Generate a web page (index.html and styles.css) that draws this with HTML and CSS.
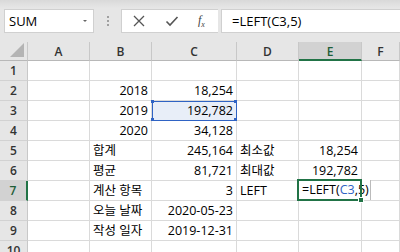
FILE: index.html
```html
<!DOCTYPE html>
<html lang="ko">
<head>
    <meta charset="UTF-8">
    <title>LEFT 함수</title>
    <link rel="stylesheet" href="styles.css">
</head>
<body>
    <div id="toolbar">
        <div class="nameBox">
            <span>SUM</span>
            <span class="caret"></span>
        </div>
        <div class="grip"><span class="gripDots"></span></div>
        <div class="fxButtons">
            <svg width="14" height="14" viewBox="0 0 14 14"><path d="M2 2 L12 12 M12 2 L2 12" stroke="#555" stroke-width="1.3" fill="none"/></svg>
            <svg width="14" height="14" viewBox="0 0 14 14"><path d="M1.5 7.5 L5 11 L12.5 3" stroke="#555" stroke-width="1.6" fill="none"/></svg>
            <span class="fx">f<sub>x</sub></span>
        </div>
        <div class="formula">=LEFT(C3,5)</div>
    </div>

    <div id="sheet">
        <div class="corner"><span class="tri"></span></div>
        <div class="colHead">A</div>
        <div class="colHead">B</div>
        <div class="colHead">C</div>
        <div class="colHead">D</div>
        <div class="colHead active">E</div>
        <div class="colHead">F</div>

        <div class="rowHead">1</div>
        <div class="cell"></div><div class="cell"></div><div class="cell"></div><div class="cell"></div><div class="cell"></div><div class="cell"></div>

        <div class="rowHead">2</div>
        <div class="cell"></div><div class="cell num">2018</div><div class="cell num">18,254</div><div class="cell"></div><div class="cell"></div><div class="cell"></div>

        <div class="rowHead">3</div>
        <div class="cell"></div><div class="cell num">2019</div>
        <div class="cell num refCell">192,782<i class="dot tl"></i><i class="dot tr"></i><i class="dot bl"></i><i class="dot br"></i></div>
        <div class="cell"></div><div class="cell"></div><div class="cell"></div>

        <div class="rowHead">4</div>
        <div class="cell"></div><div class="cell num">2020</div><div class="cell num">34,128</div><div class="cell"></div><div class="cell"></div><div class="cell"></div>

        <div class="rowHead">5</div>
        <div class="cell"></div><div class="cell">합계</div><div class="cell num">245,164</div><div class="cell">최소값</div><div class="cell num">18,254</div><div class="cell"></div>

        <div class="rowHead">6</div>
        <div class="cell"></div><div class="cell">평균</div><div class="cell num">81,721</div><div class="cell">최대값</div><div class="cell num">192,782</div><div class="cell"></div>

        <div class="rowHead active">7</div>
        <div class="cell"></div><div class="cell">계산 항목</div><div class="cell num">3</div><div class="cell">LEFT</div>
        <div class="cell editing"><span class="editText">=LEFT(<b>C3</b>,5)</span><span class="selBox"></span><span class="handle"></span></div>
        <div class="cell"></div>

        <div class="rowHead">8</div>
        <div class="cell"></div><div class="cell">오늘 날짜</div><div class="cell num">2020-05-23</div><div class="cell"></div><div class="cell"></div><div class="cell"></div>

        <div class="rowHead">9</div>
        <div class="cell"></div><div class="cell">작성 일자</div><div class="cell num">2019-12-31</div><div class="cell"></div><div class="cell"></div><div class="cell"></div>

        <div class="rowHead">10</div>
        <div class="cell"></div><div class="cell"></div><div class="cell"></div><div class="cell"></div><div class="cell"></div><div class="cell"></div>
    </div>
</body>
</html>
```

FILE: styles.css
```css
body {
    margin: 0;
    padding: 0;
    width: 400px;
    height: 252px;
    overflow: hidden;
    background-color: #fff;
    font-family: 'Open Sans', 'Noto Sans CJK KR', sans-serif;
    color: #000;
}

#toolbar {
    height: 42px;
    box-sizing: border-box;
    padding-top: 9px;
    display: flex;
    align-items: flex-start;
    background: linear-gradient(#d9d9d9, #e6e6e6 8px);
}

.nameBox {
    width: 90px;
    height: 24px;
    margin-left: 4px;
    box-sizing: border-box;
    background-color: #fff;
    border: 1px solid #d0d0d0;
    display: flex;
    align-items: center;
    justify-content: space-between;
    padding: 0 6px 0 4px;
    font-size: 13px;
}

.caret {
    width: 0;
    height: 0;
    border-left: 2px solid transparent;
    border-right: 2px solid transparent;
    border-top: 2px solid #666;
}

.grip {
    width: 27px;
    height: 24px;
    display: flex;
    justify-content: center;
    align-items: center;
}

.gripDots {
    width: 2px;
    height: 2px;
    background-color: #a0a0a0;
    box-shadow: 0 -4px 0 #a0a0a0, 0 4px 0 #a0a0a0;
}

.fxButtons {
    width: 97px;
    height: 24px;
    box-sizing: border-box;
    background-color: #fff;
    border: 1px solid #d0d0d0;
    border-right: none;
    display: flex;
    align-items: center;
    gap: 19px;
    padding-left: 10px;
}

.fx {
    font-family: 'Liberation Serif', serif;
    font-style: italic;
    font-size: 12px;
    color: #444;
}

.fx sub {
    font-size: 8px;
}

.formula {
    flex: 1;
    height: 24px;
    margin-left: 3px;
    box-sizing: border-box;
    background-color: #fff;
    border: 1px solid #d0d0d0;
    border-right: none;
    padding-left: 10px;
    font-size: 13px;
    line-height: 22px;
}

#sheet {
    display: grid;
    grid-template-columns: 28px 62px 62px 85px 62px 63px 1fr;
    grid-template-rows: 19px repeat(9, 20px) 20px;
    font-size: 12.5px;
}

.corner {
    background-color: #e6e6e6;
    border-right: 1px solid #c8c8c8;
    border-bottom: 1px solid #b8b8b8;
    position: relative;
}

.tri {
    position: absolute;
    right: 3px;
    bottom: 3px;
    width: 0;
    height: 0;
    border-left: 14px solid transparent;
    border-bottom: 14px solid #b4b4b4;
}

.colHead {
    background-color: #e6e6e6;
    border-right: 1px solid #c8c8c8;
    border-bottom: 1px solid #b8b8b8;
    text-align: center;
    font-size: 12px;
    font-weight: 600;
    color: #333;
    line-height: 19px;
}

.colHead.active {
    background-color: #d2d2d2;
    color: #1e5e37;
    border-bottom: 2px solid #217346;
}

.rowHead {
    background-color: #e6e6e6;
    border-right: 1px solid #c8c8c8;
    border-bottom: 1px solid #d2d2d2;
    text-align: center;
    font-size: 12px;
    font-weight: 600;
    color: #333;
    line-height: 20px;
}

.rowHead.active {
    background-color: #d2d2d2;
    color: #1e5e37;
    border-right: 2px solid #217346;
}

.cell {
    box-sizing: border-box;
    border-right: 1px solid #dadada;
    border-bottom: 1px solid #dadada;
    padding: 0 3px;
    line-height: 19px;
    white-space: nowrap;
}

.num {
    text-align: right;
}

.refCell {
    position: relative;
    background-color: #e8eef8;
    outline: 1px solid #2f63c4;
    outline-offset: -1px;
}

.dot {
    position: absolute;
    width: 3px;
    height: 3px;
    background-color: #2f63c4;
}

.dot.tl { left: -1px; top: -1px; }
.dot.tr { right: -1px; top: -1px; }
.dot.bl { left: -1px; bottom: -1px; }
.dot.br { right: -1px; bottom: -1px; }

.editing {
    position: relative;
    z-index: 2;
    overflow: visible;
    padding: 0;
}

.editText {
    position: absolute;
    left: 0;
    top: -1px;
    height: 20px;
    padding: 0 1px 0 3px;
    background-color: #fff;
    border-right: 1px solid #bbb;
    line-height: 20px;
    font-size: 12.5px;
}

.editText b {
    font-weight: normal;
    color: #2f63c4;
}

.selBox {
    position: absolute;
    left: -2px;
    top: -2px;
    right: -1px;
    bottom: -1px;
    border: 2px solid #217346;
}

.handle {
    position: absolute;
    right: -3px;
    bottom: -3px;
    width: 4px;
    height: 4px;
    background-color: #217346;
    border: 1px solid #fff;
}
```
